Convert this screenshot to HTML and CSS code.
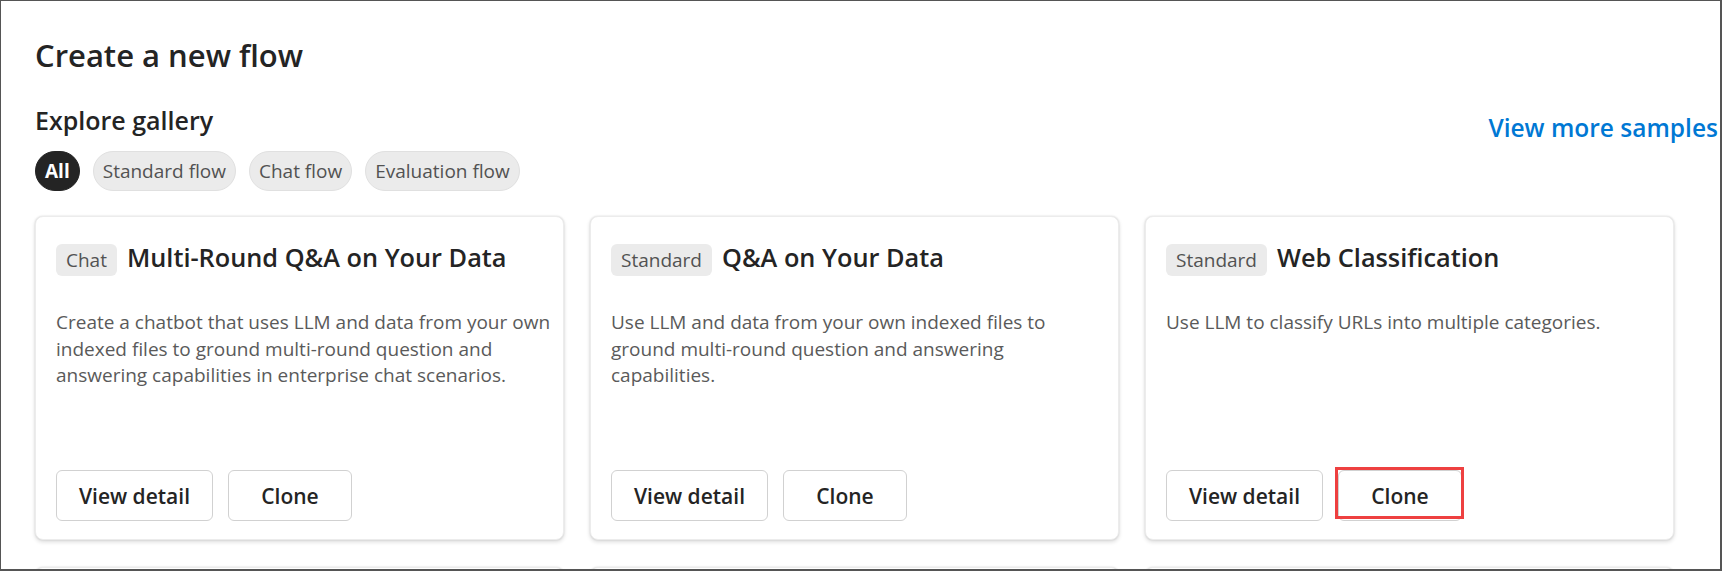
FILE: index.html
```html
<!DOCTYPE html>
<html lang="en">
<head>
<meta charset="utf-8">
<title>Create a new flow</title>
<link rel="stylesheet" href="styles.css">
</head>
<body>
<div class="frame">
  <main class="page">
    <h1 class="title">Create a new flow</h1>
    <div class="gallery-head">
      <div class="gallery-left">
        <h2 class="gallery-title">Explore gallery</h2>
        <div class="pills">
          <span class="pill active">All</span>
          <span class="pill">Standard flow</span>
          <span class="pill">Chat flow</span>
          <span class="pill">Evaluation flow</span>
        </div>
      </div>
      <a class="more" href="#">View more samples</a>
    </div>
    <div class="cards">
      <section class="card">
        <div class="card-head"><span class="tag">Chat</span><h3 class="card-title">Multi-Round Q&amp;A on Your Data</h3></div>
        <p class="desc">Create a chatbot that uses LLM and data from your own<br>indexed files to ground multi-round question and<br>answering capabilities in enterprise chat scenarios.</p>
        <div class="actions"><button class="btn">View detail</button><button class="btn">Clone</button></div>
      </section>
      <section class="card">
        <div class="card-head"><span class="tag">Standard</span><h3 class="card-title">Q&amp;A on Your Data</h3></div>
        <p class="desc">Use LLM and data from your own indexed files to<br>ground multi-round question and answering<br>capabilities.</p>
        <div class="actions"><button class="btn">View detail</button><button class="btn">Clone</button></div>
      </section>
      <section class="card">
        <div class="card-head"><span class="tag">Standard</span><h3 class="card-title">Web Classification</h3></div>
        <p class="desc">Use LLM to classify URLs into multiple categories.</p>
        <div class="actions"><button class="btn">View detail</button><span class="highlight"><button class="btn">Clone</button></span></div>
      </section>
      <section class="card"></section>
      <section class="card"></section>
      <section class="card"></section>
    </div>
  </main>
</div>
</body>
</html>
```
FILE: styles.css
```css
* { box-sizing: border-box; }
html, body { margin: 0; background: #fff; }
body {
  font-family: "Open Sans", "Segoe UI", sans-serif;
  color: #242424;
}
.frame {
  width: 1722px;
  height: 571px;
  border-style: solid;
  border-color: #555;
  border-width: 1px 2px 2px 1px;
  overflow: hidden;
}
.page { padding: 34px 2px 0 34px; }
.title {
  margin: 0;
  font-size: 31px;
  font-weight: 600;
  line-height: 40px;
}
.gallery-head {
  display: flex;
  justify-content: space-between;
  align-items: flex-start;
  margin-top: 29px;
}
.gallery-title {
  margin: 0;
  font-size: 25px;
  font-weight: 600;
  line-height: 32px;
}
.more {
  margin-top: 8px;
  font-size: 24.5px;
  font-weight: 600;
  line-height: 32px;
  color: #0078d4;
  text-decoration: none;
}
.pills { display: flex; gap: 13px; margin-top: 15px; }
.pill {
  height: 40px;
  padding: 0 9px;
  border: 1px solid #e0e0e0;
  background: #ebebeb;
  border-radius: 20px;
  font-size: 19px;
  line-height: 38px;
  color: #525252;
}
.pill.active {
  background: #242424;
  border-color: #242424;
  color: #fff;
  font-weight: 700;
}
.cards {
  display: grid;
  grid-template-columns: repeat(3, 529px);
  gap: 27px 26px;
  margin-top: 25px;
}
.card {
  height: 324px;
  border: 1px solid #ececec;
  border-radius: 8px;
  background: #fff;
  box-shadow: 0 2px 4px rgba(0,0,0,.14), 0 0 2px rgba(0,0,0,.12);
  padding: 24px 12px 18px 20px;
  display: flex;
  flex-direction: column;
}
.card-head { display: flex; align-items: baseline; gap: 10px; }
.tag {
  height: 32px;
  padding: 0 10px;
  background: #ebebeb;
  border-radius: 6px;
  font-size: 19px;
  line-height: 32px;
  color: #525252;
}
.card-title {
  margin: 0;
  font-size: 25.3px;
  font-weight: 600;
  line-height: 32px;
}
.desc {
  margin: 33px 0 0;
  font-size: 19px;
  line-height: 26.5px;
  color: #5a5a5a;
}
.actions { margin-top: auto; display: flex; gap: 15px; }
.btn {
  height: 51px;
  min-width: 124px;
  padding: 0 22px;
  border: 1px solid #d1d1d1;
  border-radius: 6px;
  background: #fff;
  font-family: inherit;
  font-size: 21px;
  font-weight: 600;
  color: #242424;
}
.highlight { position: relative; display: flex; }
.highlight::after {
  content: "";
  position: absolute;
  top: -3px;
  left: -3px;
  right: -2px;
  bottom: 2px;
  border: 3px solid #ee4040;
}
```
